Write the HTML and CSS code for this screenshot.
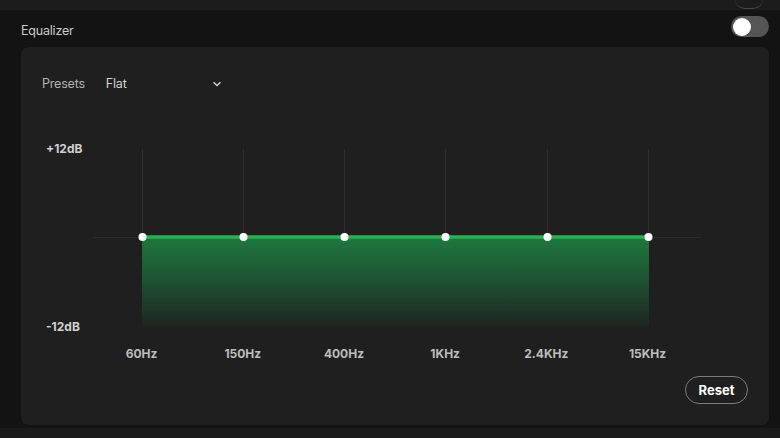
FILE: index.html
```html
<!DOCTYPE html>
<html lang="en">
<head>
<meta charset="utf-8">
<title>Equalizer</title>
<link rel="stylesheet" href="styles.css">
</head>
<body>
<div class="topbar"><span class="topbar-pill"></span></div>

<main class="eq">
  <header class="eq-header">
    <span class="eq-title">Equalizer</span>
    <span class="toggle"><span class="toggle-knob"></span></span>
  </header>

  <section class="eq-card">
    <div class="presets">
      <span class="presets-label">Presets</span>
      <button class="presets-select">
        <span>Flat</span>
        <svg class="chevron" width="10" height="6" viewBox="0 0 10 6"><path d="M1.5 1.2 5 4.6 8.5 1.2" fill="none" stroke="#d0d0d0" stroke-width="1.4"/></svg>
      </button>
    </div>

    <div class="chart">
      <div class="axis">
        <span>+12dB</span>
        <span>-12dB</span>
      </div>
      <svg class="plot" width="612" height="178" viewBox="0 0 612 178">
        <defs>
          <linearGradient id="bandFill" x1="0" y1="0" x2="0" y2="1">
            <stop offset="0" stop-color="#1e783e"/>
            <stop offset="0.5" stop-color="#1e5032"/>
            <stop offset="1" stop-color="#1f2521"/>
          </linearGradient>
        </defs>
        <g stroke="#2f2f2f" stroke-width="1">
          <line x1="51.5" y1="0" x2="51.5" y2="178"/>
          <line x1="152.5" y1="0" x2="152.5" y2="178"/>
          <line x1="253.5" y1="0" x2="253.5" y2="178"/>
          <line x1="354.5" y1="0" x2="354.5" y2="178"/>
          <line x1="456.5" y1="0" x2="456.5" y2="178"/>
          <line x1="557.5" y1="0" x2="557.5" y2="178"/>
          <line x1="2" y1="88.5" x2="610" y2="88.5" stroke="#2b2b2b"/>
        </g>
        <rect x="51" y="88" width="507" height="90" fill="url(#bandFill)"/>
        <line x1="51" y1="88" x2="557" y2="88" stroke="#22b450" stroke-width="3.5"/>
        <g fill="#ffffff">
          <circle cx="51.5" cy="88" r="4"/>
          <circle cx="152.5" cy="88" r="4"/>
          <circle cx="253.5" cy="88" r="4"/>
          <circle cx="354.5" cy="88" r="4"/>
          <circle cx="456.5" cy="88" r="4"/>
          <circle cx="557.5" cy="88" r="4"/>
        </g>
      </svg>
    </div>

    <div class="freqs">
      <span>60Hz</span>
      <span>150Hz</span>
      <span>400Hz</span>
      <span>1KHz</span>
      <span>2.4KHz</span>
      <span>15KHz</span>
    </div>

    <div class="actions">
      <button class="reset">Reset</button>
    </div>
  </section>
</main>

<div class="bottombar"></div>
</body>
</html>
```

FILE: styles.css
```css
* { box-sizing: border-box; }

html, body {
  margin: 0;
  padding: 0;
  width: 780px;
  height: 438px;
  overflow: hidden;
  background: #131313;
  font-family: Inter, "Noto Sans", "Liberation Sans", sans-serif;
  color: #cfcfcf;
}

.topbar {
  height: 10px;
  background: #1c1c1c;
  display: flex;
  justify-content: flex-end;
  padding-right: 17px;
  overflow: hidden;
}

.topbar-pill {
  width: 28px;
  height: 20px;
  margin-top: -11px;
  border-radius: 10px;
  border-bottom: 1px solid #4a4a4a;
}

.eq {
  padding: 0 11px 0 21px;
}

.eq-header {
  height: 37px;
  display: flex;
  align-items: center;
  justify-content: space-between;
}

.eq-title {
  font-size: 12.5px;
  color: #cbcbcb;
  letter-spacing: -0.2px;
  padding-top: 3px;
}

.toggle {
  width: 38px;
  height: 21px;
  border-radius: 11px;
  background: #555555;
  display: flex;
  align-items: center;
  padding-left: 2px;
  margin-top: -4px;
}

.toggle-knob {
  width: 18px;
  height: 18px;
  border-radius: 50%;
  background: #ffffff;
}

.eq-card {
  height: 378px;
  background: #1f1f1f;
  border-radius: 8px;
  padding: 20px 21px 21px 21px;
  display: flex;
  flex-direction: column;
}

.presets {
  height: 32px;
  display: flex;
  align-items: center;
  gap: 21px;
  font-size: 12.5px;
  letter-spacing: -0.2px;
}

.presets-label {
  color: #b3b3b3;
}

.presets-select {
  display: flex;
  align-items: center;
  justify-content: space-between;
  width: 116px;
  padding: 0;
  background: none;
  border: none;
  font: inherit;
  letter-spacing: inherit;
  color: #d2d2d2;
}

.chevron {
  margin-top: 1px;
}

.chart {
  margin-top: 50px;
  display: flex;
}

.axis {
  width: 49px;
  padding-left: 4px;
  margin: -8px 0 -8px;
  display: flex;
  flex-direction: column;
  justify-content: space-between;
  font-size: 12px;
  font-weight: 700;
  color: #d0d0d0;
  line-height: 16px;
}

.plot {
  display: block;
}

.freqs {
  margin-top: 19px;
  margin-left: 49px;
  display: grid;
  grid-template-columns: repeat(6, 101.2px);
  font-size: 12px;
  font-weight: 700;
  color: #bdbdbd;
  line-height: 16px;
}

.freqs span {
  text-align: center;
}

.actions {
  margin-top: 14px;
  display: flex;
  justify-content: flex-end;
}

.reset {
  width: 63px;
  height: 28px;
  border-radius: 14px;
  border: 1px solid #7a7a7a;
  background: transparent;
  color: #ffffff;
  font: 700 13px Inter, "Noto Sans", "Liberation Sans", sans-serif;
  padding: 0;
}

.bottombar {
  margin-top: 3px;
  height: 10px;
  background: #1b1b1b;
}
```
